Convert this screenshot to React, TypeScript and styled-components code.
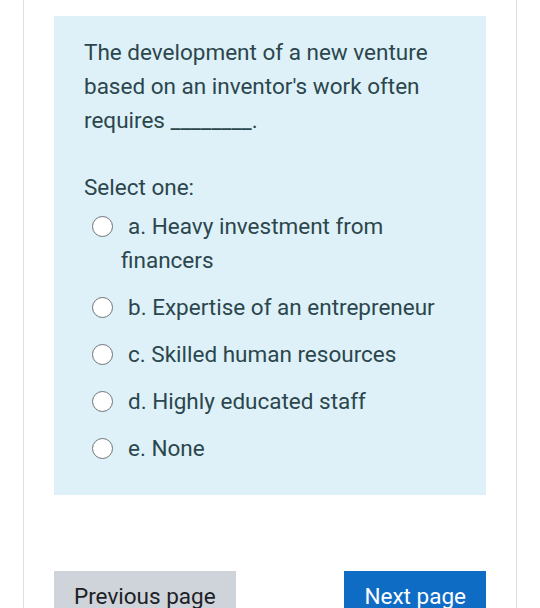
import React from "react";
import styled, { createGlobalStyle } from "styled-components";

const GlobalStyle = createGlobalStyle`
  html, body {
    margin: 0;
    padding: 0;
    background: #ffffff;
  }
  body {
    font-family: Roboto, "Liberation Sans", Arial, sans-serif;
    overflow: hidden;
  }
`;

const Page = styled.div`
  height: 608px;
  overflow: hidden;
`;

const Card = styled.div`
  margin-left: 23px;
  width: 494px;
  min-height: 700px;
  border-left: 1px solid #dcdfe3;
  border-right: 1px solid #dcdfe3;
  padding: 16px 30px 0 30px;
  box-sizing: border-box;
`;

const Formulation = styled.div`
  background: #def1f8;
  color: #2b464c;
  padding: 19px 30px 24px 30px;
  font-size: 22.5px;
  line-height: 34px;
`;

const QText = styled.div`
  margin-bottom: 33px;
`;

const Prompt = styled.div``;

const Answers = styled.div`
  margin-top: -2px;
`;

const Option = styled.div`
  padding: 6.5px 0 6.5px 37px;
  text-indent: -29px;
`;

const Radio = styled.span`
  display: inline-block;
  box-sizing: border-box;
  width: 21px;
  height: 21px;
  border: 1.6px solid #6f7376;
  border-radius: 50%;
  background: #ffffff;
  vertical-align: -3px;
  margin-right: 15px;
  text-indent: 0;
`;

const Nav = styled.div`
  display: flex;
  justify-content: space-between;
  margin-top: 76px;
`;

const Button = styled.button<{ $primary?: boolean }>`
  border: none;
  border-radius: 0;
  font-family: Roboto, "Liberation Sans", Arial, sans-serif;
  font-size: 22.5px;
  line-height: 34px;
  padding: 8px 20px 12px;
  background: ${({ $primary }) => ($primary ? "#0f6cc5" : "#ced4da")};
  color: ${({ $primary }) => ($primary ? "#ffffff" : "#1d2125")};
`;

const options = [
  "a. Heavy investment from financers",
  "b. Expertise of an entrepreneur",
  "c. Skilled human resources",
  "d. Highly educated staff",
  "e. None",
];

export default function App() {
  return (
    <Page>
      <GlobalStyle />
      <Card>
        <Formulation>
          <QText>
            The development of a new venture based on an inventor's work often
            requires ________.
          </QText>
          <Prompt>Select one:</Prompt>
          <Answers>
            {options.map((o) => (
              <Option key={o}>
                <Radio />
                {o}
              </Option>
            ))}
          </Answers>
        </Formulation>
        <Nav>
          <Button>Previous page</Button>
          <Button $primary>Next page</Button>
        </Nav>
      </Card>
    </Page>
  );
}
